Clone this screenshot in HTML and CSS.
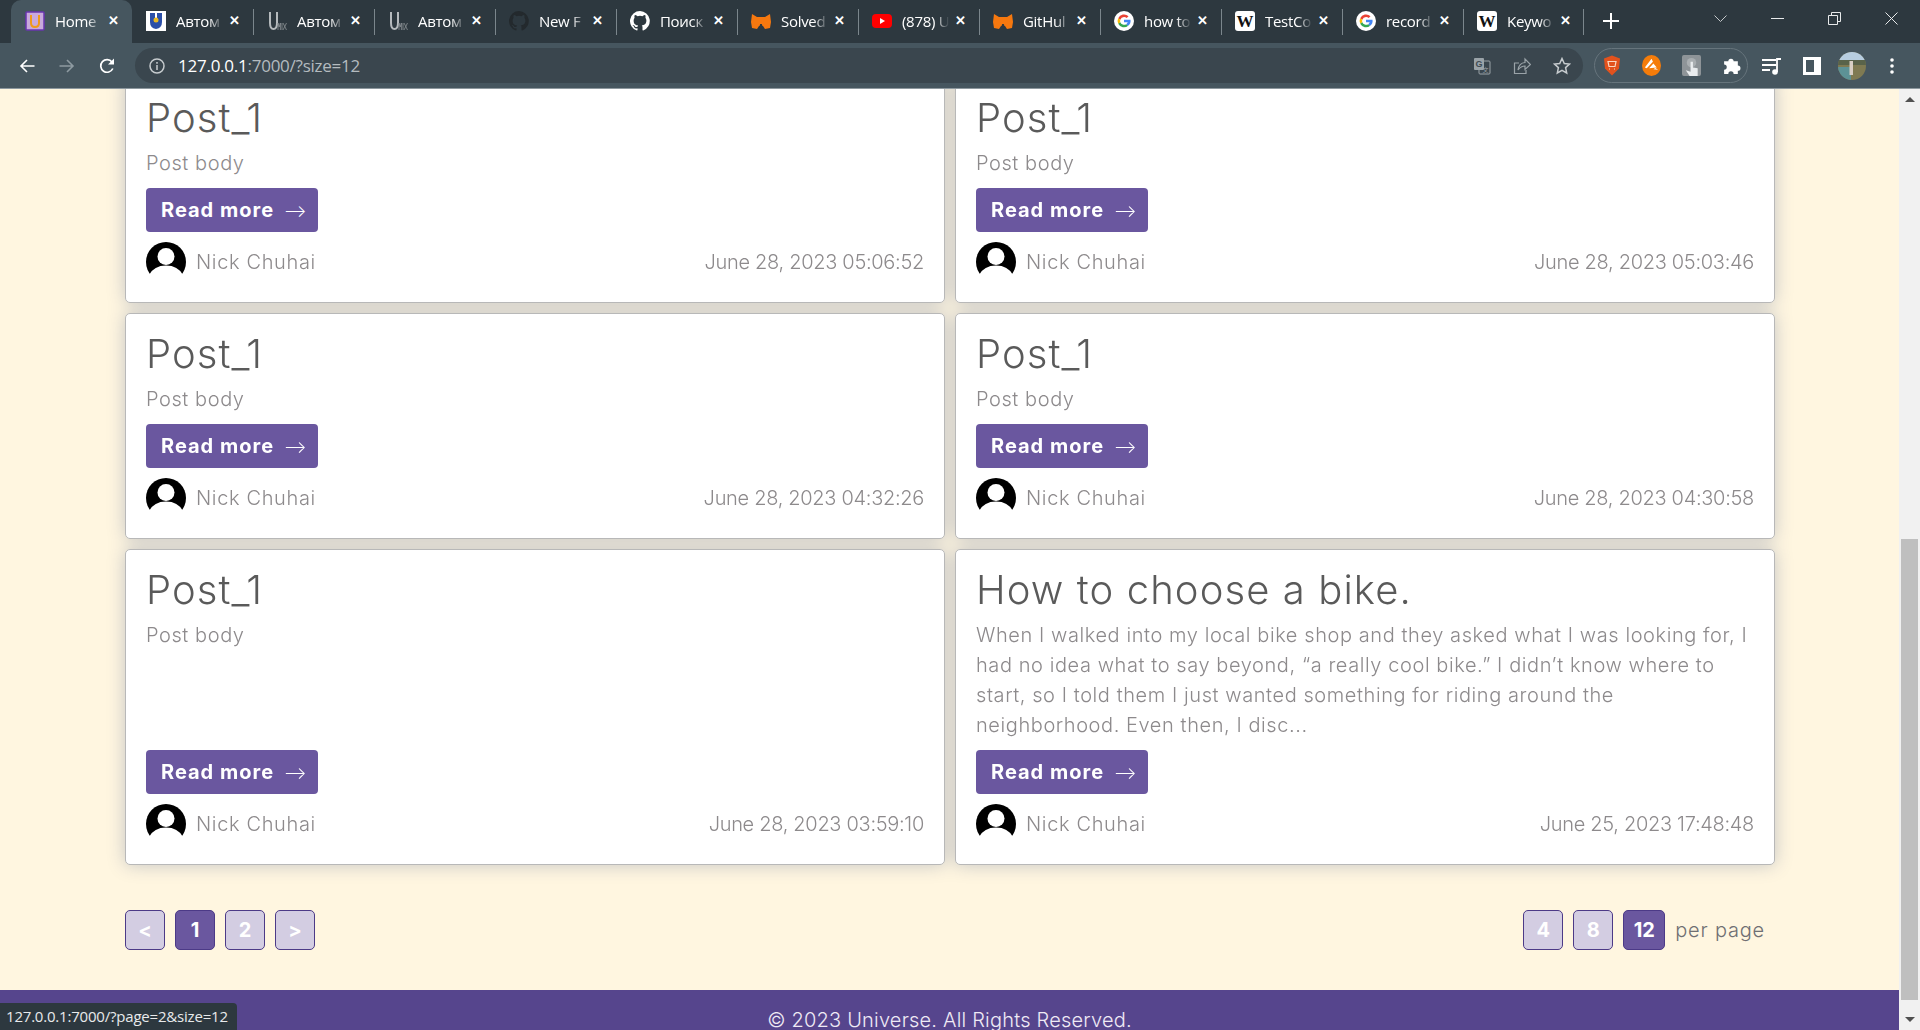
FILE: index.html
```html
<!DOCTYPE html>
<html lang="en">
<head>
    <meta charset="UTF-8">
    <title>Home</title>
    <link rel="stylesheet" href="styles.css">
</head>
<body>
<svg class="defs" width="0" height="0">
    <defs>
        <symbol id="user" viewBox="0 0 40 40">
            <circle cx="20" cy="20" r="20" fill="#000"/>
            <circle cx="20" cy="14.5" r="8.5" fill="#fff"/>
            <path d="M3 33Q8 23.500 20 23.500T37 33V41H3z" fill="#fff"/>
        </symbol>
        <symbol id="umix" viewBox="0 0 20 20">
            <path d="M3 1v11q0 6 3.500 6T10 12V1" fill="none" stroke="#b5babd" stroke-width="2"/>
            <path d="M11 19v-7l1.200 4 1.200-4v7M15 12v7M16 12l3.500 7M19.500 12L16 19" fill="none" stroke="#8b9296" stroke-width=".8"/>
        </symbol>
        <symbol id="github" viewBox="0 0 16 16">
            <path d="M8 0a8 8 0 0 0-2.500 15.600c.4.1.5-.2.5-.4v-1.400c-2.200.5-2.700-1-2.700-1-.4-.9-.9-1.200-.9-1.200-.7-.5.1-.5.1-.5.8.1 1.200.8 1.200.8.7 1.200 1.900.9 2.300.7.1-.5.3-.9.5-1.100-1.800-.2-3.600-.9-3.600-4 0-.9.3-1.600.8-2.100-.1-.2-.4-1 .1-2.100 0 0 .7-.2 2.200.8a7.600 7.600 0 0 1 4 0c1.500-1 2.200-.8 2.200-.8.4 1.100.2 1.900.1 2.100.5.6.8 1.300.8 2.100 0 3.100-1.900 3.700-3.700 3.900.3.3.6.8.6 1.500v2.200c0 .2.1.5.6.4A8 8 0 0 0 8 0z"/>
        </symbol>
        <symbol id="fox" viewBox="0 0 20 20">
            <path d="M1 3l5 3h8l5-3 1 8-1 6-5 1-2-3H8l-2 3-5-1-1-6z" fill="#f6780f"/>
            <path d="M8.500 15h3l-.7-2H9.200z" fill="#2d383f"/>
        </symbol>
        <symbol id="google" viewBox="0 0 20 20">
            <circle cx="10" cy="10" r="10" fill="#fff"/>
            <path d="M10 6a4 4 0 0 1 2.700 1l1.800-1.800A6.500 6.500 0 0 0 4.200 7.200L6.300 8.800A4 4 0 0 1 10 6z" fill="#ea4335"/>
            <path d="M4.200 7.200a6.500 6.500 0 0 0 0 5.600l2.100-1.600a4 4 0 0 1 0-2.400z" fill="#fbbc05"/>
            <path d="M4.200 12.800a6.500 6.500 0 0 0 10 2l-2-1.600A4 4 0 0 1 6.300 11.200z" fill="#34a853"/>
            <path d="M16.500 8.700H10v2.600h3.700a3 3 0 0 1-1.500 1.900l2 1.600a6.500 6.500 0 0 0 2.300-6.100z" fill="#4285f4"/>
        </symbol>
        <symbol id="wiki" viewBox="0 0 20 20">
            <rect width="20" height="20" rx="3" fill="#fff"/>
            <text x="10" y="15.500" class="wiki-w">W</text>
        </symbol>
    </defs>
</svg>

<div class="browser">
    <div class="tabstrip">
        <div class="tab active">
            <svg class="favicon" viewBox="0 0 20 20"><rect x="1" y="1" width="18" height="18" rx="1" fill="#c9a9dc" stroke="#6a35b0" stroke-width="1.500"/><path d="M6 4v8q0 4 4 4t4-4V4" fill="none" stroke="#f09a1a" stroke-width="2"/></svg>
            <span class="tab-title">Home</span><span class="tab-x">&#10005;</span>
        </div>
        <div class="tab">
            <svg class="favicon" viewBox="0 0 20 20"><rect width="20" height="20" fill="#fff"/><path d="M4 2h5v8h2V2h5v9q0 6-6 7-6-1-6-7z" fill="#2b4fa8"/><circle cx="10" cy="9" r="2.500" fill="#e8b923"/></svg>
            <span class="tab-title">Автом</span><span class="tab-x">&#10005;</span>
        </div>
        <div class="tab sep">
            <svg class="favicon"><use href="#umix"/></svg>
            <span class="tab-title">Автом</span><span class="tab-x">&#10005;</span>
        </div>
        <div class="tab sep">
            <svg class="favicon"><use href="#umix"/></svg>
            <span class="tab-title">Автом</span><span class="tab-x">&#10005;</span>
        </div>
        <div class="tab sep">
            <svg class="favicon gh-dark"><use href="#github"/></svg>
            <span class="tab-title">New F</span><span class="tab-x">&#10005;</span>
        </div>
        <div class="tab sep">
            <svg class="favicon gh-light"><use href="#github"/></svg>
            <span class="tab-title">Поиск</span><span class="tab-x">&#10005;</span>
        </div>
        <div class="tab sep">
            <svg class="favicon"><use href="#fox"/></svg>
            <span class="tab-title">Solved</span><span class="tab-x">&#10005;</span>
        </div>
        <div class="tab sep">
            <svg class="favicon" viewBox="0 0 20 20"><rect y="3" width="20" height="14" rx="4" fill="#f00"/><path d="M8 7l5 3-5 3z" fill="#fff"/></svg>
            <span class="tab-title">(878) U</span><span class="tab-x">&#10005;</span>
        </div>
        <div class="tab sep">
            <svg class="favicon"><use href="#fox"/></svg>
            <span class="tab-title">GitHul</span><span class="tab-x">&#10005;</span>
        </div>
        <div class="tab sep">
            <svg class="favicon"><use href="#google"/></svg>
            <span class="tab-title">how to</span><span class="tab-x">&#10005;</span>
        </div>
        <div class="tab sep">
            <svg class="favicon"><use href="#wiki"/></svg>
            <span class="tab-title">TestCo</span><span class="tab-x">&#10005;</span>
        </div>
        <div class="tab sep">
            <svg class="favicon"><use href="#google"/></svg>
            <span class="tab-title">record</span><span class="tab-x">&#10005;</span>
        </div>
        <div class="tab sep last">
            <svg class="favicon"><use href="#wiki"/></svg>
            <span class="tab-title">Keywo</span><span class="tab-x">&#10005;</span>
        </div>
        <svg class="newtab" viewBox="0 0 16 16"><path d="M8 0v16M0 8h16" stroke="#fff" stroke-width="2"/></svg>
        <div class="window-btns">
            <svg class="win-btn" viewBox="0 0 13 13"><path d="M.5 3.500L6.500 9.500l6-6" fill="none" stroke="#c4c8ca"/></svg>
            <svg class="win-btn" viewBox="0 0 13 13"><path d="M0 6.500h13" stroke="#e8eaeb"/></svg>
            <svg class="win-btn" viewBox="0 0 13 13"><path d="M.5 3.500h9v9h-9zM3.500 3.500v-3h9v9h-3" fill="none" stroke="#e8eaeb"/></svg>
            <svg class="win-btn" viewBox="0 0 13 13"><path d="M.5.5l12 12M12.500.5l-12 12" stroke="#e8eaeb"/></svg>
        </div>
    </div>

    <div class="toolbar">
        <svg class="nav-icon back" viewBox="0 0 16 16"><path d="M15.500 8H2M8 2L2 8l6 6" fill="none" stroke="#fff" stroke-width="1.600"/></svg>
        <svg class="nav-icon forward" viewBox="0 0 16 16"><path d="M.5 8H14M8 2l6 6-6 6" fill="none" stroke="#8e9aa1" stroke-width="1.600"/></svg>
        <svg class="nav-icon reload" viewBox="0 0 16 16"><path d="M13.800 10.500A6.300 6.300 0 1 1 13 4" fill="none" stroke="#fff" stroke-width="1.700"/><path d="M15 .5V6.500H9z" fill="#fff"/></svg>
        <div class="omnibox">
            <svg class="info-icon" viewBox="0 0 16 16"><circle cx="8" cy="8" r="7" fill="none" stroke="#c6cbce" stroke-width="1.500"/><path d="M8 7v5M8 4v1.700" stroke="#c6cbce" stroke-width="1.500"/></svg>
            <span class="url"><b>127.0.0.1</b>:7000/?size=12</span>
            <div class="omni-actions">
                <svg class="omni-icon" viewBox="0 0 18 18"><rect x="6" y="4" width="11" height="13" rx="1" fill="none" stroke="#9aa3a8"/><rect x="1" y="1" width="10" height="12" rx="1" fill="#9aa3a8"/><text x="6" y="10" class="tr-g">G</text><text x="12.500" y="15" class="tr-x">文</text></svg>
                <svg class="omni-icon" viewBox="0 0 18 18"><path d="M6 6H1.500v10.500H13V13" fill="none" stroke="#9aa3a8" stroke-width="1.200"/><path d="M5 13q1-7 7-7.500V2l5.500 5.500L12 12.500V9q-4 0-7 4z" fill="none" stroke="#9aa3a8" stroke-width="1.200"/></svg>
                <svg class="omni-icon" viewBox="0 0 18 18"><path d="M9 1.500l2.300 5 5.200.6-3.900 3.500 1.100 5.400L9 13.300 4.300 16l1.100-5.400L1.500 7.100l5.200-.6z" fill="none" stroke="#c6cbce" stroke-width="1.500"/></svg>
            </div>
        </div>
        <div class="extensions">
            <svg class="ext-icon shield" viewBox="0 0 18 20"><path d="M9 0l8 3-1 10-7 7-7-7L1 3z" fill="#e2521d"/><path d="M5 6h8l-1 5H6zM6 13.500h1M11 13.500h1" fill="none" stroke="#f9d9c4" stroke-width="1.200"/></svg>
            <svg class="ext-icon" viewBox="0 0 20 22"><ellipse cx="10" cy="11" rx="10" ry="11" fill="#f57c0a"/><path d="M3 13l7-9 1.500 3L5 14zM7.500 14l4.500-5 3.500 4zM12 15l2-1.500 3 2z" fill="#fff"/></svg>
            <svg class="ext-icon" viewBox="0 0 20 22"><rect width="20" height="22" rx="2" fill="#8e9498"/><circle cx="10" cy="8" r="5" fill="#a9aeb1"/><path d="M9 7h2.500v6l5 1v8H8l-4-6 5 1.500z" fill="#e9ecee"/></svg>
            <svg class="ext-icon" viewBox="0 0 18 18"><path d="M2 5h4a2.500 2.500 0 0 1 5 0h4v4a2.500 2.500 0 0 1 0 5v3h-4a2.500 2.500 0 0 0-5 0H2v-4a2.500 2.500 0 0 0 0-5z" fill="#fff"/></svg>
        </div>
        <svg class="tool-icon music" viewBox="0 0 20 18"><path d="M0 3h14M0 8h14M0 13h8" stroke="#fff" stroke-width="1.800"/><path d="M15 15V2h4" fill="none" stroke="#fff" stroke-width="1.800"/><circle cx="13" cy="15" r="2.800" fill="#fff"/></svg>
        <svg class="tool-icon panel" viewBox="0 0 18 18"><path d="M0 0h18v18H0z" fill="#fff"/><path d="M3 3h8v12H3z" fill="#46565f"/></svg>
        <svg class="avatar-me" viewBox="0 0 28 28"><defs><clipPath id="me"><circle cx="14" cy="14" r="14"/></clipPath></defs><g clip-path="url(#me)"><rect width="28" height="28" fill="#7f7a52"/><rect width="28" height="8" fill="#b7cde0"/><rect y="8" width="28" height="5" fill="#59634a"/><rect y="15" width="13" height="13" fill="#5d9296"/><rect x="11.500" y="9" width="3.500" height="14" fill="#d8cfc4"/></g></svg>
        <svg class="menu-icon" viewBox="0 0 4 16"><circle cx="2" cy="2" r="1.800" fill="#fff"/><circle cx="2" cy="8" r="1.800" fill="#fff"/><circle cx="2" cy="14" r="1.800" fill="#fff"/></svg>
    </div>

    <div class="viewport">
        <div class="page">
            <main class="content">
                <div class="posts">
                    <article class="card">
                        <h2>Post_1</h2>
                        <p>Post body</p>
                        <a class="read-more">Read more <span class="arrow">&#10230;</span></a>
                        <div class="meta">
                            <span class="author"><svg class="user-pic"><use href="#user"/></svg>Nick Chuhai</span>
                            <span class="date">June 28, 2023 05:06:52</span>
                        </div>
                    </article>
                    <article class="card">
                        <h2>Post_1</h2>
                        <p>Post body</p>
                        <a class="read-more">Read more <span class="arrow">&#10230;</span></a>
                        <div class="meta">
                            <span class="author"><svg class="user-pic"><use href="#user"/></svg>Nick Chuhai</span>
                            <span class="date">June 28, 2023 05:03:46</span>
                        </div>
                    </article>
                    <article class="card">
                        <h2>Post_1</h2>
                        <p>Post body</p>
                        <a class="read-more">Read more <span class="arrow">&#10230;</span></a>
                        <div class="meta">
                            <span class="author"><svg class="user-pic"><use href="#user"/></svg>Nick Chuhai</span>
                            <span class="date">June 28, 2023 04:32:26</span>
                        </div>
                    </article>
                    <article class="card">
                        <h2>Post_1</h2>
                        <p>Post body</p>
                        <a class="read-more">Read more <span class="arrow">&#10230;</span></a>
                        <div class="meta">
                            <span class="author"><svg class="user-pic"><use href="#user"/></svg>Nick Chuhai</span>
                            <span class="date">June 28, 2023 04:30:58</span>
                        </div>
                    </article>
                    <article class="card">
                        <h2>Post_1</h2>
                        <p>Post body</p>
                        <a class="read-more">Read more <span class="arrow">&#10230;</span></a>
                        <div class="meta">
                            <span class="author"><svg class="user-pic"><use href="#user"/></svg>Nick Chuhai</span>
                            <span class="date">June 28, 2023 03:59:10</span>
                        </div>
                    </article>
                    <article class="card">
                        <h2>How to choose a bike.</h2>
                        <p>When I walked into my local bike shop and they asked what I was looking for, I had no idea what to say beyond, “a really cool bike.” I didn’t know where to start, so I told them I just wanted something for riding around the neighborhood. Even then, I disc...</p>
                        <a class="read-more">Read more <span class="arrow">&#10230;</span></a>
                        <div class="meta">
                            <span class="author"><svg class="user-pic"><use href="#user"/></svg>Nick Chuhai</span>
                            <span class="date">June 25, 2023 17:48:48</span>
                        </div>
                    </article>
                </div>
                <div class="pager-row">
                    <div class="pager">
                        <a class="page-btn">&lt;</a>
                        <a class="page-btn current">1</a>
                        <a class="page-btn">2</a>
                        <a class="page-btn">&gt;</a>
                    </div>
                    <div class="pager">
                        <a class="page-btn">4</a>
                        <a class="page-btn">8</a>
                        <a class="page-btn current wide">12</a>
                        <span class="per-page">per page</span>
                    </div>
                </div>
            </main>
            <footer class="footer">© 2023 Universe. All Rights Reserved.</footer>
        </div>
        <div class="scrollbar">
            <div class="scroll-arrow up"></div>
            <div class="scroll-track"><div class="scroll-thumb"></div></div>
            <div class="scroll-arrow down"></div>
        </div>
        <div class="status-bubble">127.0.0.1:7000/?page=2&amp;size=12</div>
    </div>
</div>
</body>
</html>
```

FILE: styles.css
```css
* {
    box-sizing: border-box;
}

body {
    margin: 0;
    font-family: "Liberation Sans", Arial, sans-serif;
    background-color: #fff6e0;
    overflow: hidden;
}

.defs {
    position: absolute;
}

.browser {
    display: flex;
    flex-direction: column;
    height: 1030px;
}

/* tabs */
.tabstrip {
    display: flex;
    align-items: center;
    flex: 0 0 43px;
    padding-left: 11px;
    background-color: #2d383f;
}

.tab {
    position: relative;
    display: flex;
    flex: 0 0 121px;
    align-items: center;
    height: 43px;
    padding: 0 0 2px 14px;
    color: #fff;
}

.tab.active {
    background-color: #46565f;
    border-radius: 10px 10px 0 0;
}

.tab.sep::before {
    content: "";
    position: absolute;
    left: 0;
    top: 9px;
    height: 26px;
    width: 1px;
    background-color: #7b868c;
}

.tab.last::after {
    content: "";
    position: absolute;
    right: 0;
    top: 9px;
    height: 26px;
    width: 1px;
    background-color: #7b868c;
}

.favicon {
    flex: 0 0 20px;
    width: 20px;
    height: 20px;
}

.gh-dark {
    fill: #23292d;
}

.gh-light {
    fill: #fff;
}

.tab-title {
    flex: 0 0 50px;
    margin-left: 10px;
    overflow: hidden;
    white-space: nowrap;
    -webkit-mask-image: linear-gradient(to right, #000 65%, transparent 95%);
    mask-image: linear-gradient(to right, #000 65%, transparent 95%);
    font-family: "Open Sans", sans-serif;
    font-size: 15px;
    letter-spacing: -0.3px;
}

.tab-x {
    margin-left: 3px;
    font-size: 13px;
    font-weight: bold;
}

.wiki-w {
    font-family: "Liberation Serif", serif;
    font-size: 17px;
    font-weight: bold;
    text-anchor: middle;
    fill: #111;
}

.tr-g {
    font-size: 9px;
    font-weight: bold;
    text-anchor: middle;
    fill: #3f4c54;
}

.tr-x {
    font-family: "Noto Sans CJK SC", sans-serif;
    font-size: 6px;
    text-anchor: middle;
    fill: #9aa3a8;
}

.newtab {
    width: 16px;
    height: 16px;
    margin: -2px 0 0 19px;
}

.window-btns {
    display: flex;
    align-items: center;
    gap: 44px;
    height: 36px;
    margin-left: auto;
    margin-right: 22px;
    align-self: flex-start;
}

.win-btn {
    width: 13px;
    height: 13px;
}

/* address bar */
.toolbar {
    display: flex;
    align-items: center;
    flex: 0 0 46px;
    background-color: #46565f;
    border-bottom: 1px solid #8d989e;
}

.nav-icon {
    width: 16px;
    height: 16px;
    margin-left: 24px;
}

.nav-icon.back {
    margin-left: 19px;
}

.omnibox {
    display: flex;
    align-items: center;
    width: 1448px;
    height: 35px;
    margin-left: 20px;
    padding: 0 12px 0 14px;
    background-color: #3a464e;
    border-radius: 18px;
}

.info-icon {
    width: 16px;
    height: 16px;
}

.url {
    margin-left: 13px;
    color: #b4bbbf;
    font-family: "Open Sans", sans-serif;
    font-size: 17px;
    letter-spacing: -0.25px;
}

.url b {
    color: #fff;
    font-weight: normal;
}

.omni-actions {
    display: flex;
    align-items: center;
    gap: 22px;
    margin-left: auto;
}

.omni-icon {
    width: 18px;
    height: 18px;
}

.extensions {
    display: flex;
    align-items: center;
    gap: 21px;
    width: 154px;
    height: 35px;
    margin-left: 11px;
    padding-left: 8px;
    border: 1px solid #66747c;
    border-radius: 18px;
}

.ext-icon {
    flex: none;
    width: 19px;
    height: 21px;
}

.ext-icon.shield {
    width: 18px;
}

.tool-icon {
    width: 20px;
    height: 18px;
}

.tool-icon.music {
    margin-left: 14px;
}

.tool-icon.panel {
    width: 18px;
    margin-left: 21px;
}

.avatar-me {
    width: 28px;
    height: 28px;
    margin-left: 17px;
}

.menu-icon {
    width: 4px;
    height: 16px;
    margin-left: 24px;
}

/* page */
.viewport {
    position: relative;
    display: flex;
    flex: 1;
    overflow: hidden;
}

.page {
    flex: 1;
    min-width: 0;
    overflow: hidden;
}

/* page is scrolled down, first row starts above the fold */
.content {
    margin-top: -12px;
    padding: 0 124px 0 125px;
}

/* shadow on the whole grid so it never falls on a neighbouring card */
.posts {
    display: grid;
    grid-template-columns: 1fr 1fr;
    gap: 10px;
    filter: drop-shadow(0 0 9px #c4c4c4);
}

.card {
    display: flex;
    flex-direction: column;
    padding: 16px 20px 20px;
    background-color: #fff;
    border: 1px solid #b8b8b8;
    border-radius: 5px;
}

.card h2 {
    margin: 0;
    color: #5a5a5a;
    font-family: Inter, sans-serif;
    font-size: 40px;
    font-weight: 300;
    line-height: 48px;
    letter-spacing: 1.1px;
}

.card p {
    flex: 1;
    margin: 6px 0 10px;
    color: #8d8a8c;
    font-family: Inter, sans-serif;
    font-size: 20px;
    font-weight: 300;
    line-height: 30px;
    letter-spacing: 0.58px;
}

.read-more {
    align-self: flex-start;
    width: 172px;
    height: 44px;
    padding-left: 15px;
    line-height: 44px;
    white-space: nowrap;
    color: #fff;
    background-color: #6a579f;
    border-radius: 4px;
    font-family: Inter, sans-serif;
    font-size: 20px;
    font-weight: 700;
    letter-spacing: 1px;
}

.arrow {
    margin-left: 4px;
    font-size: 17px;
    font-weight: 300;
    letter-spacing: 0;
}

.meta {
    display: flex;
    justify-content: space-between;
    align-items: center;
    height: 40px;
    margin-top: 10px;
    color: #8d8a8c;
    font-family: Inter, sans-serif;
    font-size: 20px;
    font-weight: 300;
}

.author {
    display: flex;
    align-items: center;
    gap: 10px;
    letter-spacing: 0.65px;
}

.date {
    letter-spacing: -0.3px;
}

.user-pic {
    width: 40px;
    height: 40px;
}

.pager-row {
    display: flex;
    justify-content: space-between;
    margin-top: 45px;
}

.pager {
    display: flex;
    align-items: center;
    gap: 10px;
}

.page-btn {
    display: flex;
    align-items: center;
    justify-content: center;
    width: 40px;
    height: 40px;
    color: #fff;
    background-color: #d3cde2;
    border: 1px solid #4c3a87;
    border-radius: 5px;
    font-family: Inter, sans-serif;
    font-size: 20px;
    font-weight: 700;
}

.page-btn.current {
    background-color: #6a579f;
}

.page-btn.wide {
    width: 42px;
}

.per-page {
    margin-right: 10px;
    color: #6f6f73;
    font-family: Inter, sans-serif;
    font-size: 20px;
    font-weight: 300;
    letter-spacing: 0.8px;
}

.footer {
    height: 60px;
    margin-top: 40px;
    padding-top: 20px;
    line-height: 20px;
    color: #efeaf5;
    background-color: #56458d;
    text-align: center;
    font-family: Inter, sans-serif;
    font-size: 20px;
    font-weight: 300;
    letter-spacing: 0.2px;
}

.scrollbar {
    display: flex;
    flex-direction: column;
    flex: 0 0 21px;
    background-color: #f1f1f1;
}

.scroll-arrow {
    flex: 0 0 21px;
}

.scroll-arrow::before {
    content: "";
    display: block;
    width: 0;
    margin: 8px auto 0;
    border-left: 5px solid transparent;
    border-right: 5px solid transparent;
}

.scroll-arrow.up::before {
    border-bottom: 5px solid #505050;
}

.scroll-arrow.down::before {
    border-top: 5px solid #505050;
}

.scroll-track {
    flex: 1;
    padding: 0 2px;
}

.scroll-thumb {
    height: 461px;
    margin-top: 429px;
    background-color: #bfbfbf;
}

.status-bubble {
    position: absolute;
    left: 0;
    bottom: 0;
    height: 27px;
    padding: 0 9px 0 6px;
    line-height: 27px;
    color: #e8eaeb;
    background-color: #2d383f;
    border-radius: 0 4px 0 0;
    font-family: "Open Sans", sans-serif;
    font-size: 15px;
    letter-spacing: -0.2px;
}
```
